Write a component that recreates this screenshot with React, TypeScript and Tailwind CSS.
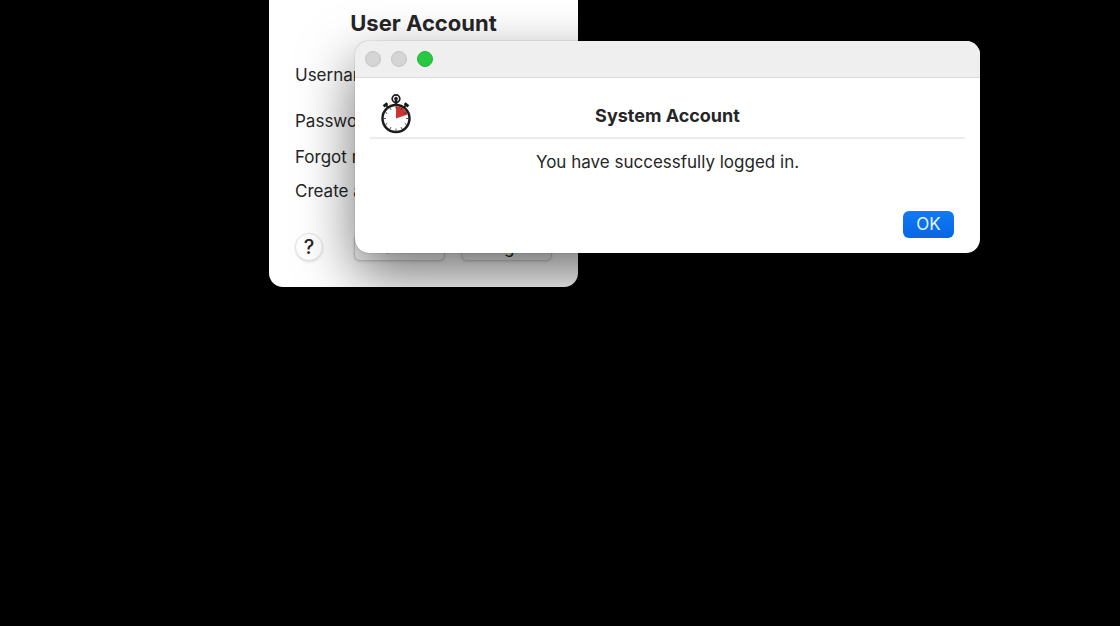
import { FormEvent, useState } from "react";

const TICKS = [0, 30, 60, 90, 120, 150, 180, 210, 240, 270, 300, 330];

const StopwatchIcon = () => (
    <svg viewBox="0 0 32 40" className="w-8 h-10" aria-hidden="true">
        <circle cx="16" cy="4.7" r="3.8" fill="none" stroke="#1c1c1c" strokeWidth="1.7" />
        <circle cx="16" cy="4.5" r="1.7" fill="#1c1c1c" />
        <path d="M16 4v7" stroke="#1c1c1c" strokeWidth="2.6" />
        <path d="M5.2 10.2l3.2 3.6M26.8 10.2l-3.2 3.6" stroke="#1c1c1c" strokeWidth="2" />
        <path d="M3.6 12.4l3.8-3.2M28.4 12.4l-3.8-3.2" stroke="#1c1c1c" strokeWidth="2.8" />
        <circle cx="16" cy="24.5" r="13.5" fill="#fff" stroke="#1c1c1c" strokeWidth="2.5" />
        <path d="M16 24.5V12.2A12.3 12.3 0 0 1 27.6 20.6Z" fill="#cf3330" />
        {TICKS.map((angle) => (
            <path
                key={angle}
                d="M16 12.6v1.8"
                stroke="#1c1c1c"
                strokeWidth="0.8"
                transform={`rotate(${angle} 16 24.5)`}
            />
        ))}
    </svg>
)

const LoginWindow = () => {

    const [username, setUsername] = useState<string>("");
    const [password, setPassword] = useState<string>("");

    const submitHandler = (event: FormEvent) => {
        event.preventDefault();
    }

    return (
        <form
            name="login"
            onSubmit={submitHandler}
            className="absolute left-[269px] top-0 w-[309px] px-[26px] pt-[9px] pb-[26px] rounded-b-[14px] bg-white"
        >
            <h1 className="text-[22px] leading-7 font-bold text-center">User Account</h1>

            <div className="flex items-center gap-3 mt-[26px] h-6">
                <label htmlFor="username" className="w-20 shrink-0">Username</label>
                <input
                    type="text"
                    id="username"
                    value={username}
                    onChange={(event) => setUsername(event.target.value)}
                    className="min-w-0 flex-1 h-6 px-1 border border-neutral-300"
                />
            </div>
            <div className="flex items-center gap-3 mt-[22px] h-6">
                <label htmlFor="password" className="w-20 shrink-0">Password</label>
                <input
                    type="password"
                    id="password"
                    value={password}
                    onChange={(event) => setPassword(event.target.value)}
                    className="min-w-0 flex-1 h-6 px-1 border border-neutral-300"
                />
            </div>

            <a href="#forgot" className="block w-fit mt-3">Forgot my password</a>
            <a href="#create" className="block w-fit mt-[10px]">Create account</a>

            <div className="flex items-center mt-[30px]">
                <button
                    type="button"
                    aria-label="Help"
                    className="w-7 h-7 mr-[31px] rounded-full border border-neutral-200 bg-white shadow-sm text-xl leading-6 font-medium"
                >
                    ?
                </button>
                <div className="flex flex-1 gap-4">
                    <button type="button" className="flex-1 h-7 rounded-md border border-neutral-300 bg-white shadow-sm">Cancel</button>
                    <button type="submit" className="flex-1 h-7 rounded-md border border-neutral-300 bg-neutral-100 shadow-sm">Login</button>
                </div>
            </div>
        </form>
    )
}

const MessageDialog = () => (
    <section
        role="dialog"
        aria-labelledby="dialog-title"
        className="absolute left-[355px] top-[41px] w-[625px] rounded-[14px] bg-white shadow-[0_0_1px_rgba(0,0,0,0.6),0_22px_56px_rgba(0,0,0,0.55)]"
    >
        <div className="flex items-center gap-[10px] h-[37px] px-[10px] rounded-t-[14px] border-b border-[#dcdcdc] bg-[#efefef]">
            <button type="button" aria-label="Close" className="w-4 h-4 rounded-full border border-[#c4c4c4] bg-[#d5d5d5]" />
            <button type="button" aria-label="Minimize" className="w-4 h-4 rounded-full border border-[#c4c4c4] bg-[#d5d5d5]" />
            <button type="button" aria-label="Zoom" className="w-4 h-4 rounded-full border border-[#24b53a] bg-[#28c840]" />
        </div>

        <div className="px-[15px] py-[15px]">
            <header className="grid grid-cols-[52px_1fr_52px] items-center h-[46px] pb-[3px] border-b-2 border-[#ececec]">
                <span className="pl-[10px]"><StopwatchIcon /></span>
                <h2 id="dialog-title" className="pt-1 text-lg leading-6 font-bold text-center">System Account</h2>
            </header>
            <p className="mt-[11px] text-center">You have successfully logged in.</p>
            <div className="flex justify-end mt-[37px] pr-[11px]">
                <button
                    type="button"
                    className="w-[51px] h-[27px] pb-[2px] rounded-md bg-linear-to-b from-[#137af2] to-[#0566e6] text-[#e3f6ff]"
                >
                    OK
                </button>
            </div>
        </div>
    </section>
)

const App = () => {
    return (
        <main className="relative min-h-screen overflow-hidden bg-black font-['Inter','Liberation_Sans',sans-serif] text-[17px] leading-6 text-[#262626]">
            <LoginWindow />
            <MessageDialog />
        </main>
    )
}

export default App;
